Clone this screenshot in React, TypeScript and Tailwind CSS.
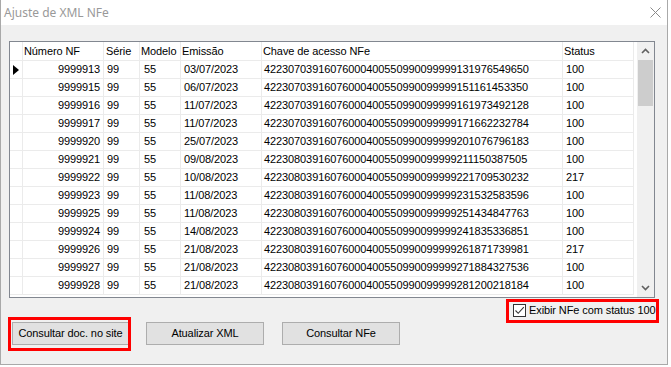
import React from "react";

const rows: [string, string, string, string][] = [
  ["9999913", "03/07/2023", "42230703916076000400550990099999131976549650", "100"],
  ["9999915", "06/07/2023", "42230703916076000400550990099999151161453350", "100"],
  ["9999916", "11/07/2023", "42230703916076000400550990099999161973492128", "100"],
  ["9999917", "11/07/2023", "42230703916076000400550990099999171662232784", "100"],
  ["9999920", "25/07/2023", "42230703916076000400550990099999201076796183", "100"],
  ["9999921", "09/08/2023", "42230803916076000400550990099999211150387505", "100"],
  ["9999922", "10/08/2023", "42230803916076000400550990099999221709530232", "217"],
  ["9999923", "11/08/2023", "42230803916076000400550990099999231532583596", "100"],
  ["9999925", "11/08/2023", "42230803916076000400550990099999251434847763", "100"],
  ["9999924", "14/08/2023", "42230803916076000400550990099999241835336851", "100"],
  ["9999926", "21/08/2023", "42230803916076000400550990099999261871739981", "217"],
  ["9999927", "21/08/2023", "42230803916076000400550990099999271884327536", "100"],
  ["9999928", "21/08/2023", "42230803916076000400550990099999281200218184", "100"],
];

const cell = "h-full border-r border-[#ebebeb] flex items-center overflow-hidden whitespace-nowrap shrink-0";

export default function App() {
  return (
    <div className="relative w-[671px] h-[367px] bg-white overflow-hidden font-['Liberation_Sans',Arial,sans-serif] text-[11px] text-black tracking-[-0.1px]">
      <div className="w-[668px] border-l border-r border-b border-[#a9a9a9]">
        {/* Title bar */}
        <div className="h-[25px] bg-white flex items-center justify-between">
          <span className="pl-[3px] font-['Noto_Sans',sans-serif] text-[12px] tracking-normal text-[#999999]">Ajuste de XML NFe</span>
          <svg width="11" height="11" viewBox="0 0 11 11" className="mr-[6px] mt-[-1px]">
            <path d="M0.5 0.5 L10.5 10.5 M10.5 0.5 L0.5 10.5" stroke="#8a8a8a" strokeWidth="1" />
          </svg>
        </div>
        {/* Body */}
        <div className="h-[339px] bg-[#f0f0f0] pt-[16px] pl-[8px]">
          {/* Grid */}
          <div className="w-[646px] h-[257px] border border-[#828790] bg-white flex">
            <div className="w-[624px] flex flex-col">
              {/* header */}
              <div className="h-[19px] flex border-b border-[#ebebeb] shrink-0">
                <div className={`${cell} w-[13px]`} />
                <div className={`${cell} w-[81px] pl-[1px]`}>Número NF</div>
                <div className={`${cell} w-[36px] pl-[2px]`}>Série</div>
                <div className={`${cell} w-[41px] pl-[1px]`}>Modelo</div>
                <div className={`${cell} w-[81px] pl-[1px]`}>Emissão</div>
                <div className={`${cell} w-[301px] pl-[1px]`}>Chave de acesso NFe</div>
                <div className={`${cell} w-[71px] pl-[1px]`}>Status</div>
              </div>
              {rows.map((r, i) => (
                <div key={i} className="h-[18px] flex border-b border-[#ebebeb] shrink-0">
                  <div className={`${cell} w-[13px] pl-[3px]`}>
                    {i === 0 && (
                      <svg width="6" height="10" viewBox="0 0 6 10">
                        <path d="M0 0 L6 5 L0 10 Z" fill="#000" />
                      </svg>
                    )}
                  </div>
                  <div className={`${cell} w-[81px] justify-end pr-[3px]`}>{r[0]}</div>
                  <div className={`${cell} w-[36px] pl-[3px]`}>99</div>
                  <div className={`${cell} w-[41px] pl-[4px]`}>55</div>
                  <div className={`${cell} w-[81px] pl-[3px]`}>{r[1]}</div>
                  <div className={`${cell} w-[301px] pl-[2px]`}>{r[2]}</div>
                  <div className={`${cell} w-[71px] pl-[3px]`}>{r[3]}</div>
                </div>
              ))}
            </div>
            <div className="w-[3px]" />
            {/* Scrollbar */}
            <div className="w-[17px] h-full bg-[#f0f0f0] flex flex-col">
              <div className="h-[17px] flex items-center justify-center">
                <svg width="9" height="6" viewBox="0 0 9 6">
                  <path d="M1 5 L4.5 1.5 L8 5" stroke="#606060" strokeWidth="1.6" fill="none" />
                </svg>
              </div>
              <div className="h-[46px] mx-[1px] mt-[1px] bg-[#cdcdcd]" />
              <div className="flex-1" />
              <div className="h-[17px] flex items-center justify-center mb-[1px]">
                <svg width="9" height="6" viewBox="0 0 9 6">
                  <path d="M1 1 L4.5 4.5 L8 1" stroke="#606060" strokeWidth="1.6" fill="none" />
                </svg>
              </div>
            </div>
          </div>
          {/* Checkbox row */}
          <div className="h-[24px] flex items-center pl-[504px]">
            <div className="w-[13px] h-[13px] border border-[#333333] bg-white flex items-center justify-center">
              <svg width="11" height="11" viewBox="0 0 11 11">
                <path d="M1.5 5.5 L4.2 8.3 L9.8 2.2" stroke="#333" strokeWidth="1.1" fill="none" />
              </svg>
            </div>
            <span className="ml-[3px]">Exibir NFe com status 100</span>
          </div>
          {/* Buttons */}
          <div className="flex pl-[3px]">
            <button className="w-[117px] h-[23px] bg-[#e1e1e1] border border-[#adadad] flex items-center justify-center">Consultar doc. no site</button>
            <button className="ml-[17px] w-[118px] h-[23px] bg-[#e1e1e1] border border-[#adadad] flex items-center justify-center">Atualizar XML</button>
            <button className="ml-[18px] w-[118px] h-[23px] bg-[#e1e1e1] border border-[#adadad] flex items-center justify-center">Consultar NFe</button>
          </div>
        </div>
      </div>
      {/* red highlight annotations */}
      <div className="absolute left-[8px] top-[317px] w-[123px] h-[34px] border-[3px] border-[#ff0000]" />
      <div className="absolute left-[506px] top-[299px] w-[153px] h-[24px] border-[3px] border-[#ff0000]" />
    </div>
  );
}
